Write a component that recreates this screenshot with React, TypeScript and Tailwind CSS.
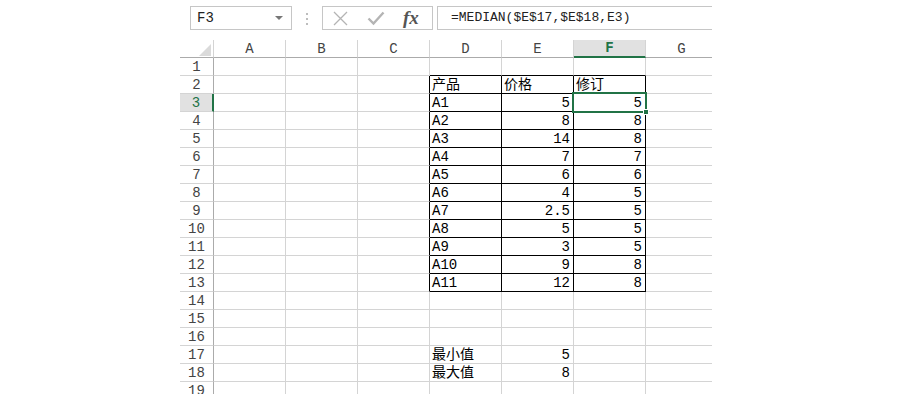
import React from "react";
import clsx from "clsx";

type Cell = { t: string; num?: boolean };

const COLS = ["A", "B", "C", "D", "E", "F", "G"];

const prices = ["5", "8", "14", "7", "6", "4", "2.5", "5", "3", "9", "12"];
const revised = ["5", "8", "8", "7", "6", "5", "5", "5", "5", "8", "8"];

const data: Record<number, Record<string, Cell>> = {
  2: { D: { t: "产品" }, E: { t: "价格" }, F: { t: "修订" } },
  17: { D: { t: "最小值" }, E: { t: "5", num: true } },
  18: { D: { t: "最大值" }, E: { t: "8", num: true } },
};
prices.forEach((p, i) => {
  data[i + 3] = {
    D: { t: `A${i + 1}` },
    E: { t: p, num: true },
    F: { t: revised[i], num: true },
  };
});

const font = "font-['Liberation_Mono','Noto_Sans_CJK_SC',monospace]";

function FormulaBar() {
  return (
    <div className="h-[40px] flex items-start pt-[6px]">
      {/* Name box */}
      <div className="ml-[10px] w-[102px] h-[24px] border border-[#c6c6c6] flex items-center pl-[6px] pr-[8px]">
        <span className={clsx(font, "text-[14px] text-[#222] flex-1")}>F3</span>
        <span className="w-0 h-0 border-l-[4px] border-r-[4px] border-t-[4px] border-l-transparent border-r-transparent border-t-[#777]" />
      </div>
      {/* grip dots */}
      <div className="ml-[14px] w-[2px] mt-[7px] flex flex-col gap-[3px]">
        <span className="w-[2px] h-[2px] bg-[#bdbdbd]" />
        <span className="w-[2px] h-[2px] bg-[#bdbdbd]" />
        <span className="w-[2px] h-[2px] bg-[#bdbdbd]" />
      </div>
      {/* cancel / enter / fx */}
      <div className="ml-[14px] w-[111px] h-[24px] border border-[#c6c6c6] flex items-center">
        <svg width="17" height="17" viewBox="0 0 17 17" className="ml-[9px]">
          <path d="M2 2 L15 15 M15 2 L2 15" stroke="#b4b4b4" strokeWidth="1.3" fill="none" />
        </svg>
        <svg width="18" height="16" viewBox="0 0 18 16" className="ml-[18px]">
          <path d="M1.5 8.5 L6.5 13.5 L16.5 2.5" stroke="#b4b4b4" strokeWidth="2.4" fill="none" />
        </svg>
        <span className="ml-[18px] font-['Liberation_Serif',serif] italic font-bold text-[19px] text-[#555] leading-none -mt-[2px]">
          fx
        </span>
      </div>
      {/* formula */}
      <div className="ml-[4px] flex-1 h-[24px] border-y border-l border-[#c6c6c6] flex items-center pl-[13px]">
        <span className={clsx(font, "text-[13px] text-[#222] whitespace-nowrap")}>=MEDIAN($E$17,$E$18,E3)</span>
      </div>
    </div>
  );
}

function HeaderRow() {
  return (
    <div className="flex">
      <div className="relative w-[34px] h-[18px] shrink-0 border-r border-b border-r-[#d4d4d4] border-b-[#ababab]">
        <svg width="12" height="12" viewBox="0 0 12 12" className="absolute right-[2px] bottom-[1px]">
          <polygon points="12,0 12,12 0,12" fill="#dadada" />
        </svg>
      </div>
      {COLS.map((c) => {
        const sel = c === "F";
        return (
          <div
            key={c}
            className={clsx(
              "w-[72px] h-[18px] shrink-0 border-r border-r-[#d4d4d4] flex items-center justify-center text-[14px] leading-none",
              font,
              sel
                ? "bg-[#e1e1e1] border-b-2 border-b-[#217346] text-[#217346] font-bold"
                : "border-b border-b-[#ababab] text-[#444]",
            )}
          >
            {c}
          </div>
        );
      })}
    </div>
  );
}

function Row({ r }: { r: number }) {
  const sel = r === 3;
  const inTable = r >= 2 && r <= 13;
  return (
    <div className="flex">
      <div
        className={clsx(
          "w-[34px] h-[18px] shrink-0 border-b border-b-[#d4d4d4] flex items-end justify-center pb-[1px] text-[14px] leading-none",
          font,
          sel
            ? "bg-[#e1e1e1] text-[#217346] border-r-2 border-r-[#217346]"
            : "border-r border-r-[#ababab] text-[#444]",
        )}
      >
        {r}
      </div>
      {COLS.map((c) => {
        const cell = data[r]?.[c];
        const rightBlack = inTable && ["C", "D", "E", "F"].includes(c);
        const bottomBlack = r >= 1 && r <= 13 && ["D", "E", "F"].includes(c);
        const isSel = sel && c === "F";
        return (
          <div
            key={c}
            className={clsx(
              "relative w-[72px] h-[18px] shrink-0 border-r border-b flex items-end pb-[1px] text-[14px] leading-none text-black whitespace-nowrap",
              font,
              rightBlack ? "border-r-black" : "border-r-[#d4d4d4]",
              bottomBlack ? "border-b-black" : "border-b-[#d4d4d4]",
              cell?.num ? "justify-end pr-[3px]" : "pl-[2px]",
            )}
          >
            {cell && <span>{cell.t}</span>}
            {isSel && (
              <div className="absolute -left-[2px] -top-[2px] -right-[2px] -bottom-[2px] border-2 border-[#217346] z-10">
                <span className="absolute -right-[4px] -bottom-[4px] w-[6px] h-[6px] bg-[#217346] border border-white" />
              </div>
            )}
          </div>
        );
      })}
    </div>
  );
}

export default function App() {
  const rows = Array.from({ length: 19 }, (_, i) => i + 1);
  return (
    <div className="w-[900px] h-[394px] bg-white overflow-hidden pl-[180px]">
      <div className="w-[532px] h-[394px] overflow-hidden">
        <FormulaBar />
        <div className="w-[540px]">
          <HeaderRow />
          {rows.map((r) => (
            <Row key={r} r={r} />
          ))}
        </div>
      </div>
    </div>
  );
}
